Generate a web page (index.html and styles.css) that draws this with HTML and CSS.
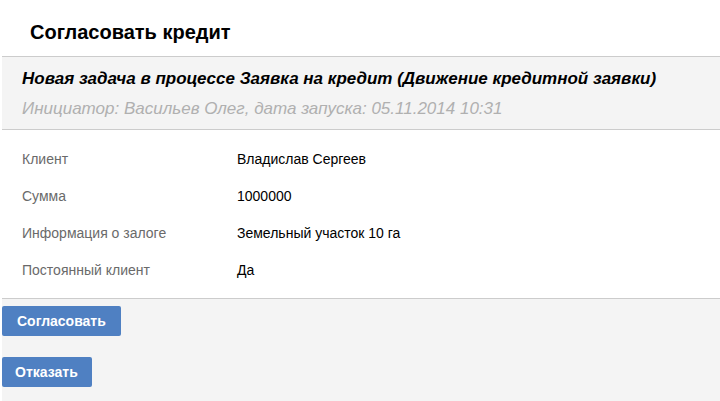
FILE: index.html
```html
<!DOCTYPE html>
<html>
<head>
	<meta charset="utf-8">
	<title>Согласовать кредит</title>
	<link rel="stylesheet" href="styles.css">
</head>
<body>
	<div class="page-title">Согласовать кредит</div>
	<div class="task">
		<div class="task-header">
			<div class="task-name">Новая задача в процессе Заявка на кредит (Движение кредитной заявки)</div>
			<div class="task-info">Инициатор: Васильев Олег, дата запуска: 05.11.2014 10:31</div>
		</div>
		<div class="fields">
			<div class="field">
				<span class="label">Клиент</span>
				<span class="value">Владислав Сергеев</span>
			</div>
			<div class="field">
				<span class="label">Сумма</span>
				<span class="value">1000000</span>
			</div>
			<div class="field">
				<span class="label">Информация о залоге</span>
				<span class="value">Земельный участок 10 га</span>
			</div>
			<div class="field">
				<span class="label">Постоянный клиент</span>
				<span class="value">Да</span>
			</div>
		</div>
		<div class="actions">
			<button class="btn">Согласовать</button>
			<button class="btn btn-small">Отказать</button>
		</div>
	</div>
</body>
</html>
```

FILE: styles.css
```css
body {
  margin: 0;
  font-family: "Liberation Sans", Arial, sans-serif;
  color: #000;
  background: #fff;
}

.page-title {
  font-size: 20px;
  font-weight: bold;
  line-height: 24px;
  padding: 20px 0 12px 30px;
}

.task {
  margin-left: 2px;
}

.task-header {
  background-color: #f4f4f4;
  border-top: 1px solid #cccccc;
  border-bottom: 1px solid #cccccc;
  padding: 12px 20px 10px 20px;
}

.task-name {
  font-size: 17px;
  font-weight: bold;
  font-style: italic;
  line-height: 20px;
}

.task-info {
  font-size: 17px;
  font-style: italic;
  line-height: 20px;
  color: #b0b0b0;
  margin-top: 10px;
}

.fields {
  padding: 11px 20px 9px 20px;
  border-bottom: 1px solid #cccccc;
}

.field {
  display: grid;
  grid-template-columns: 215px 1fr;
  font-size: 14px;
  line-height: 37px;
}

.label {
  color: #6a6a6a;
}

.actions {
  background-color: #f4f4f4;
  padding: 7px 0 14px 0;
  display: flex;
  flex-direction: column;
  align-items: flex-start;
  gap: 21px;
}

.btn {
  font-family: "Liberation Sans", Arial, sans-serif;
  font-size: 14px;
  font-weight: bold;
  color: #fff;
  background-color: #4f80c2;
  border: 0;
  border-radius: 2px;
  height: 30px;
  padding: 0 15px;
}

.btn-small {
  padding: 0 14px 0 13px;
}
```
